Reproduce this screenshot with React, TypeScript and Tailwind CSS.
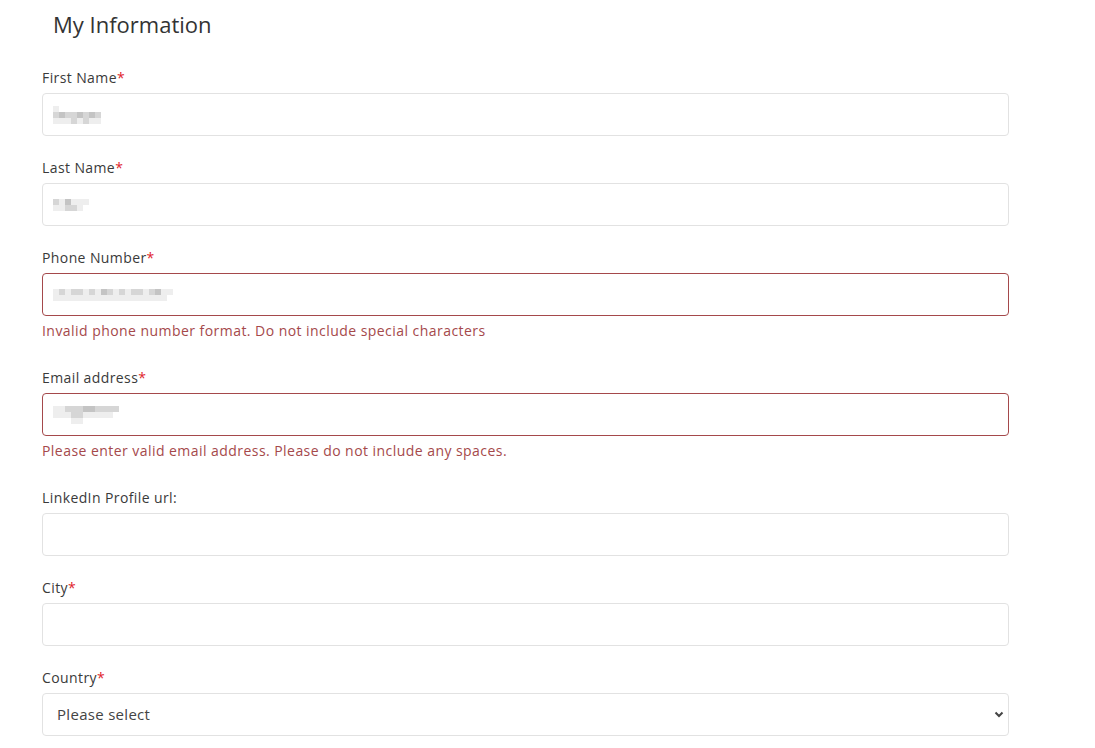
import React from "react";

const font = { fontFamily: "'Open Sans', Lato, sans-serif" };

// pixelated placeholder for blurred values
function Pixels({ rows }: { rows: string[][] }) {
  return (
    <div className="flex flex-col">
      {rows.map((r, i) => (
        <div key={i} className="flex">
          {r.map((c, j) => (
            <span key={j} className="block h-[6px] w-[6px]" style={{ background: c }} />
          ))}
        </div>
      ))}
    </div>
  );
}

function Label({ text, required }: { text: string; required?: boolean }) {
  return (
    <label className="mb-[6px] block text-[14px] leading-[18px] tracking-[0.4px] text-[#3a3a3a]">
      {text}
      {required && <span className="text-[#e0242b]">*</span>}
    </label>
  );
}

function Field({
  label,
  required,
  error,
  value,
}: {
  label: string;
  required?: boolean;
  error?: string;
  value?: string[][];
}) {
  return (
    <div className="mb-[23px]">
      <Label text={label} required={required} />
      <div
        className={
          "flex h-[43px] items-center rounded-[4px] border bg-white px-[10px] " +
          (error ? "border-[#a5494b]" : "border-[#e2e2e2]")
        }
      >
        {value && <Pixels rows={value} />}
      </div>
      {error && (
        <p className="pt-[6px] pb-[6px] text-[14px] leading-[18px] tracking-[0.45px] text-[#a5494b]">{error}</p>
      )}
    </div>
  );
}

const g1 = "#eeeeee";
const g2 = "#d6d6d6";
const g3 = "#c4c4c4";

export default function App() {
  return (
    <div className="min-h-screen bg-white" style={font}>
      <div className="w-[1009px] pl-[42px] pt-[9px]">
        <h2 className="mb-[30px] pl-[11px] text-[22px] leading-[30px] text-[#333]">My Information</h2>
        <Field
          label="First Name"
          required
          value={[
            [g1, "#fff", "#fff", "#fff", "#fff", "#fff", "#fff", "#fff"],
            [g2, g3, g2, g2, g3, g2, g3, g2],
            [g1, g1, g1, g2, g1, g2, g1, g1],
          ]}
        />
        <Field
          label="Last Name"
          required
          value={[
            [g2, g1, g3, g1, g1, g1],
            [g1, g1, g2, g2, g1, "#fff"],
          ]}
        />
        <Field
          label="Phone Number"
          required
          error="Invalid phone number format. Do not include special characters"
          value={[
            [g1, g2, g1, g2, g2, g1, g2, g1, g3, g2, g1, g2, g1, g2, g2, g1, g2, g3, g1, g1],
            [g1, g1, g1, g1, g1, g1, g1, g1, g1, g1, g1, g1, g1, g1, g1, g1, g1, g1, g1, "#fff"],
          ]}
        />
        <Field
          label="Email address"
          required
          error="Please enter valid email address. Please do not include any spaces."
          value={[
            [g1, g1, g2, g2, g2, g3, g3, g2, g2, g2, g2],
            [g1, g1, g1, g2, g2, g1, g1, g1, g1, g1, "#fff"],
            ["#fff", "#fff", "#fff", g1, g1, "#fff", "#fff", "#fff", "#fff", "#fff", "#fff"],
          ]}
        />
        <Field label="LinkedIn Profile url:" />
        <Field label="City" required />
        <div>
          <Label text="Country" required />
          <div className="flex h-[43px] items-center justify-between rounded-[4px] border border-[#e2e2e2] bg-white pl-[14px] pr-[4px]">
            <span className="text-[15px] tracking-[0.3px] text-[#444]">Please select</span>
            <svg width="10" height="7" viewBox="0 0 10 7" fill="none">
              <path d="M1.5 1.5 L5 5 L8.5 1.5" stroke="#444" strokeWidth="2" />
            </svg>
          </div>
        </div>
      </div>
    </div>
  );
}
